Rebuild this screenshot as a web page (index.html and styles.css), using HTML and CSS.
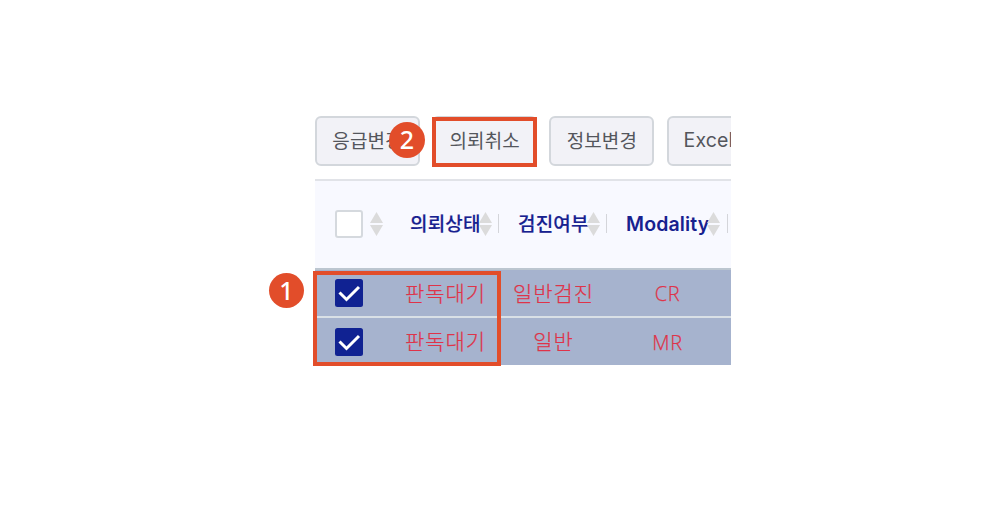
FILE: index.html
```html
<!DOCTYPE html>
<html lang="ko">
<head>
<meta charset="utf-8">
<title>의뢰취소</title>
<link rel="stylesheet" href="styles.css">
</head>
<body>
<main class="stage">
  <section class="panel">
    <div class="toolbar">
      <button class="btn">응급변경</button>
      <button class="btn">의뢰취소</button>
      <button class="btn">정보변경</button>
      <button class="btn">Excel</button>
    </div>
    <div class="table">
      <div class="row head">
        <div class="cell check"><span class="box"></span><svg class="sort" viewBox="0 0 13 24"><path d="M6.5 0 13 11H0zM0 13h13L6.5 24z"/></svg></div>
        <div class="cell title"><span>의뢰상태</span><svg class="sort" viewBox="0 0 13 24"><path d="M6.5 0 13 11H0zM0 13h13L6.5 24z"/></svg><i class="divider"></i></div>
        <div class="cell title"><span>검진여부</span><svg class="sort" viewBox="0 0 13 24"><path d="M6.5 0 13 11H0zM0 13h13L6.5 24z"/></svg><i class="divider"></i></div>
        <div class="cell title"><span class="latin">Modality</span><svg class="sort" viewBox="0 0 13 24"><path d="M6.5 0 13 11H0zM0 13h13L6.5 24z"/></svg><i class="divider"></i></div>
      </div>
      <div class="row item">
        <div class="cell check"><svg class="checked" viewBox="0 0 28 28"><rect width="28" height="28" rx="2.5"/><path d="M4.5 13.5 11.5 20.5 24 8"/></svg></div>
        <div class="cell value">판독대기</div>
        <div class="cell value">일반검진</div>
        <div class="cell value code">CR</div>
      </div>
      <div class="row item">
        <div class="cell check"><svg class="checked" viewBox="0 0 28 28"><rect width="28" height="28" rx="2.5"/><path d="M4.5 13.5 11.5 20.5 24 8"/></svg></div>
        <div class="cell value">판독대기</div>
        <div class="cell value">일반</div>
        <div class="cell value code">MR</div>
      </div>
    </div>
  </section>
  <div class="outline outline-cancel"></div>
  <div class="outline outline-rows"></div>
  <div class="badge badge-one">1</div>
  <div class="badge badge-two">2</div>
</main>
</body>
</html>
```
FILE: styles.css
```css
* { box-sizing: border-box; }
body { margin: 0; background: #fff; font-family: "Noto Sans CJK KR", sans-serif; }
.stage { position: relative; width: 1001px; height: 515px; padding: 116px 0 0 315px; overflow: hidden; }
.panel { width: 416px; height: 249px; overflow: hidden; background: #a6b3ce; }
.toolbar { display: flex; gap: 12.2px; width: 500px; height: 63px; background: #fff; }
.btn {
  flex: none; width: 105px; height: 50px; padding: 0 0 4px 0;
  border: 2px solid #d3d7dc; border-radius: 6px; background: #f2f2f7; color: #54565c;
  font: 400 19px/1 "Noto Sans CJK KR", sans-serif; letter-spacing: .1px; white-space: nowrap;
}
.btn:last-child { padding: 0 0 0 15px; text-align: left; font-family: Inter, sans-serif; font-size: 19.5px; letter-spacing: .1px; }
.row { display: grid; grid-template-columns: 76px 108px 108px 121px 3px; }
.cell { display: flex; align-items: center; white-space: nowrap; }
.head { height: 89px; padding-bottom: 1px; border-top: 2px solid #e1e3e8; background: #f8f9ff; }
.check { padding-left: 20px; }
.head .check { padding-bottom: 1px; }
.box { width: 28px; height: 28px; border: 2px solid #d5d9de; border-radius: 3px; background: #fff; }
.sort { flex: none; width: 13px; height: 24px; margin-bottom: 1px; fill: #dbdbdb; }
.check .sort { margin: 0 0 0 7px; }
.title { padding-left: 19px; color: #17218f; font-size: 19px; font-weight: 500; }
.title span { flex: none; line-height: 28px; padding-bottom: 2px; letter-spacing: .2px; -webkit-text-stroke: .15px; }
.title .latin { font: 600 19.5px/28px Inter, sans-serif; letter-spacing: .15px; padding-bottom: 0; -webkit-text-stroke: 0; }
.title .sort { margin-left: -2px; }
.divider { width: 1.5px; height: 19px; margin: 0 0 2px auto; background: #d4d5da; }
.item { height: 49px; border-top: 2px solid #d9e0e6; background: #a6b3ce; }
.item:nth-child(2) { height: 48px; border-top-color: #bcc6d0; }
.checked { width: 28px; height: 28px; fill: #102292; }
.item:nth-child(3) .checked { margin-top: 1px; }
.checked path { fill: none; stroke: #fff; stroke-width: 3; }
.value { justify-content: center; color: #df3349; font-size: 21px; font-weight: 300; letter-spacing: .9px; padding: 0 0 3px 1px; -webkit-text-stroke: .25px; }
.code { font-family: "Open Sans", "Noto Sans", sans-serif; font-size: 20px; letter-spacing: .7px; padding: 1px 0 0; }
.outline { position: absolute; border: 4px solid #e24d2a; }
.outline-cancel { left: 432px; top: 117px; width: 105px; height: 50px; }
.outline-rows { left: 313px; top: 271px; width: 188px; height: 95px; }
.badge {
  position: absolute; width: 36px; height: 36px; border-radius: 50%; background: #e24d2a; color: #fff;
  font: 500 25px/34px "Noto Sans", sans-serif; text-align: center;
}
.badge-one { left: 269px; top: 273px; width: 35px; height: 35px; }
.badge-two { left: 389px; top: 122px; }
```
